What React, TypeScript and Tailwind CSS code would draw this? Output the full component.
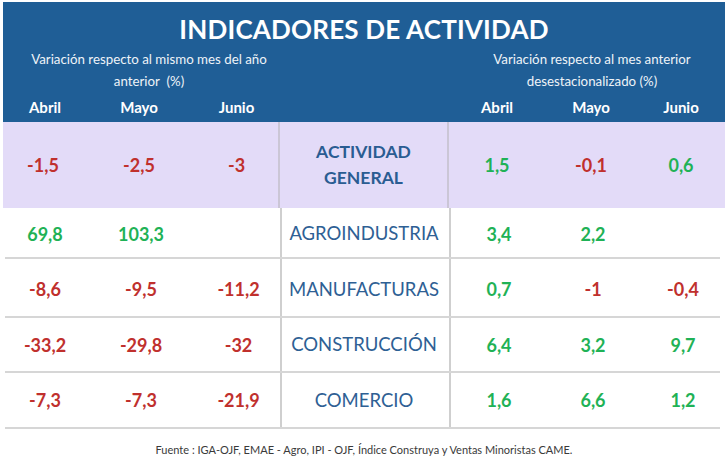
import React from "react";

type Cell = { v: string; c: "r" | "g" | "" };

const rows: { name: string; left: Cell[]; right: Cell[]; h: string; pad: string }[] = [
  {
    name: "AGROINDUSTRIA",
    left: [{ v: "69,8", c: "g" }, { v: "103,3", c: "g" }, { v: "", c: "" }],
    right: [{ v: "3,4", c: "g" }, { v: "2,2", c: "g" }, { v: "", c: "" }],
    h: "h-[51px]",
    pad: "pt-[3px]",
  },
  {
    name: "MANUFACTURAS",
    left: [{ v: "-8,6", c: "r" }, { v: "-9,5", c: "r" }, { v: "-11,2", c: "r" }],
    right: [{ v: "0,7", c: "g" }, { v: "-1", c: "r" }, { v: "-0,4", c: "r" }],
    h: "h-[59px]",
    pad: "pt-[4px]",
  },
  {
    name: "CONSTRUCCIÓN",
    left: [{ v: "-33,2", c: "r" }, { v: "-29,8", c: "r" }, { v: "-32", c: "r" }],
    right: [{ v: "6,4", c: "g" }, { v: "3,2", c: "g" }, { v: "9,7", c: "g" }],
    h: "h-[55px]",
    pad: "pt-[1px]",
  },
  {
    name: "COMERCIO",
    left: [{ v: "-7,3", c: "r" }, { v: "-7,3", c: "r" }, { v: "-21,9", c: "r" }],
    right: [{ v: "1,6", c: "g" }, { v: "6,6", c: "g" }, { v: "1,2", c: "g" }],
    h: "h-[56px]",
    pad: "pt-[1px]",
  },
];

function Num({ cell, pad = "" }: { cell: Cell; pad?: string }) {
  return (
    <div
      className={
        "flex items-center justify-center text-[18px] font-bold " +
        pad +
        " " +
        (cell.c === "r" ? "text-[#c0302d]" : "text-[#1fb256]")
      }
    >
      {cell.v}
    </div>
  );
}

const grid = "grid grid-cols-[80px_112px_83px_171px_96px_92px_88px]";

export default function App() {
  return (
    <div
      className="w-[725px] h-[465px] bg-white pl-[3px] pt-[2px] overflow-hidden"
      style={{ fontFamily: "Lato, 'Open Sans', sans-serif" }}
    >
      {/* Header */}
      <div className="bg-[#1f5e96] text-white">
        <div className="h-[46px] pt-[7px] flex items-center justify-center leading-none">
          <span className="text-[26px] font-bold tracking-[0.2px]">INDICADORES DE ACTIVIDAD</span>
        </div>
        <div className={grid + " h-[44px] text-[13.3px] leading-[22px] text-[#eef3f8]"}>
          <div className="col-span-3 pl-[17px] text-center">
            Variación respecto al mismo mes del año
            <br />
            anterior&nbsp; (%)
          </div>
          <div />
          <div className="col-span-3 pl-[10px] text-center">
            Variación respecto al mes anterior
            <br />
            desestacionalizado (%)
          </div>
        </div>
        <div className={grid + " h-[30px] text-[15px] font-bold"}>
          <div className="flex items-center justify-center pl-[4px]">Abril</div>
          <div className="flex items-center justify-center">Mayo</div>
          <div className="flex items-center justify-center">Junio</div>
          <div />
          <div className="flex items-center justify-center">Abril</div>
          <div className="flex items-center justify-center">Mayo</div>
          <div className="flex items-center justify-center">Junio</div>
        </div>
      </div>

      {/* Actividad general */}
      <div className={grid + " h-[86px] bg-[#e3dbf8]"}>
        <Num cell={{ v: "-1,5", c: "r" }} pad="pt-[1px]" />
        <Num cell={{ v: "-2,5", c: "r" }} pad="pt-[1px]" />
        <Num cell={{ v: "-3", c: "r" }} pad="pt-[1px]" />
        <div className="flex items-center justify-center border-x-2 border-[#cbc6d6] text-center text-[17.5px] font-bold leading-[26px] text-[#2a5c92]">
          <span>
            ACTIVIDAD
            <br />
            GENERAL
          </span>
        </div>
        <Num cell={{ v: "1,5", c: "g" }} pad="pt-[1px]" />
        <Num cell={{ v: "-0,1", c: "r" }} pad="pt-[1px]" />
        <Num cell={{ v: "0,6", c: "g" }} pad="pt-[1px]" />
      </div>

      {rows.map((r) => (
        <div key={r.name} className={grid + " " + r.h + " border-b-2 border-[#d6d6d6] mr-[5px] ml-[2px]"}>
          {r.left.map((c, i) => (
            <Num key={i} cell={c} pad={r.pad} />
          ))}
          <div
            className={
              "flex items-center justify-center border-x-2 border-[#cfcfcf] pr-[3px] text-[18.5px] text-[#2e6094] " +
              r.pad
            }
          >
            {r.name}
          </div>
          {r.right.map((c, i) => (
            <Num key={i} cell={c} pad={r.pad} />
          ))}
        </div>
      ))}

      <div className="pt-[13px] text-center text-[11px] text-[#3a3a3a]">
        Fuente : IGA-OJF, EMAE - Agro, IPI - OJF, Índice Construya y Ventas Minoristas CAME.
      </div>
    </div>
  );
}
